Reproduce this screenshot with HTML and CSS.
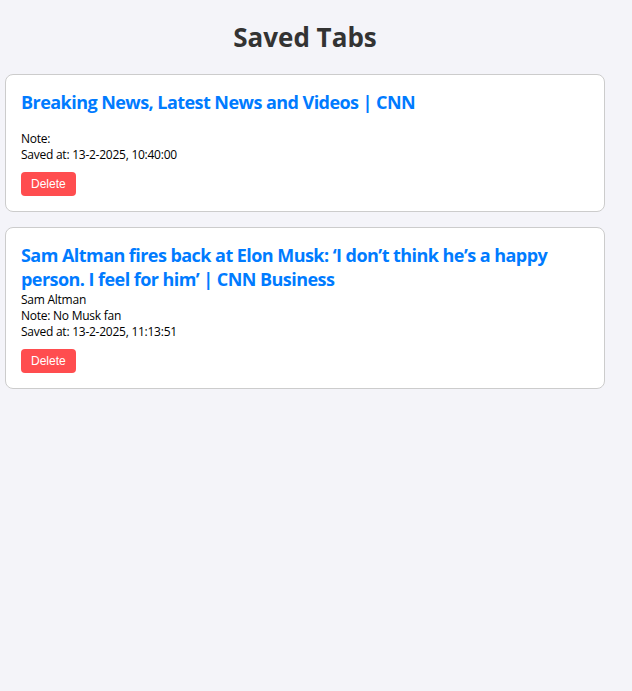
FILE: index.html
```html
<!DOCTYPE html>
<html lang="en">
<head>
<meta charset="utf-8">
<title>Saved Tabs</title>
<link rel="stylesheet" href="styles.css">
</head>
<body>
<div class="page">
  <h1 class="heading">Saved Tabs</h1>
  <div class="list">
    <div class="card">
      <a class="card-title" href="#">Breaking News, Latest News and Videos | CNN</a>
      <p class="line">&nbsp;</p>
      <p class="line">Note: </p>
      <p class="line">Saved at: 13-2-2025, 10:40:00</p>
      <button class="delete">Delete</button>
    </div>
    <div class="card">
      <a class="card-title" href="#">Sam Altman fires back at Elon Musk: ‘I don’t think he’s a happy person. I feel for him’ | CNN Business</a>
      <p class="line">Sam Altman</p>
      <p class="line">Note: No Musk fan</p>
      <p class="line">Saved at: 13-2-2025, 11:13:51</p>
      <button class="delete">Delete</button>
    </div>
  </div>
</div>
</body>
</html>
```
FILE: styles.css
```css
html, body {
  margin: 0;
  padding: 0;
  background: #f4f4f9;
}
body {
  font-family: "Open Sans", "Noto Sans", sans-serif;
  color: #000;
}
.page {
  width: 600px;
  padding: 0 5px;
}
.heading {
  margin: 0 0 18px;
  padding-top: 18px;
  text-align: center;
  font-size: 26px;
  line-height: 38px;
  font-weight: 700;
  color: #333;
}
.list {
  display: flex;
  flex-direction: column;
  gap: 15px;
}
.card {
  background: #fff;
  border: 1px solid #ccc;
  border-radius: 8px;
  padding: 15px;
  display: flex;
  flex-direction: column;
  align-items: flex-start;
}
.card-title {
  font-size: 18px;
  line-height: 24px;
  font-weight: 700;
  letter-spacing: -0.55px;
  color: #007bff;
  text-decoration: none;
}
.line {
  margin: 0;
  font-size: 12px;
  line-height: 16px;
  letter-spacing: -0.25px;
  padding-top: 1px;
  margin-bottom: -1px;
}
.delete {
  margin-top: 10px;
  height: 24px;
  padding: 0 10px;
  border: none;
  border-radius: 4px;
  background: #ff4d4f;
  color: #fff;
  font-family: "Liberation Sans", Arial, sans-serif;
  font-size: 12px;
  cursor: pointer;
}
```
